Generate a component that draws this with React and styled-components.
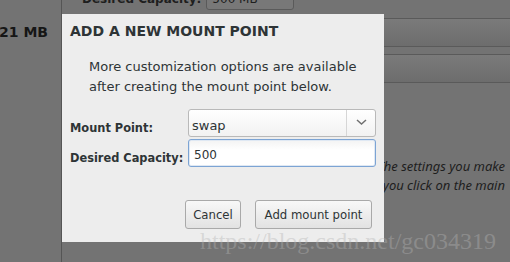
import React from "react";
import styled, { createGlobalStyle } from "styled-components";

const GlobalStyle = createGlobalStyle`
  html, body {
    margin: 0;
    padding: 0;
    background: #737373;
  }
  body {
    font-family: "DejaVu Sans", "Noto Sans", sans-serif;
    color: #2e3436;
  }
`;

const Screen = styled.div`
  position: relative;
  width: 510px;
  height: 262px;
  overflow: hidden;
  background: #737373;
  display: flex;
`;

const SideColumn = styled.div`
  width: 62px;
  flex: none;
  border-right: 1px solid #555;
  display: flex;
  flex-direction: column;
  align-items: flex-end;
  padding-top: 24px;
  box-sizing: border-box;
`;

const SizeLabel = styled.div`
  font-size: 14px;
  line-height: 16px;
  font-weight: 700;
  color: #161616;
  padding-right: 13px;
  white-space: nowrap;
`;

const Main = styled.div`
  flex: 1;
  display: flex;
  flex-direction: column;
`;

const TopRow = styled.div`
  display: flex;
  align-items: center;
  gap: 5px;
  height: 28px;
  margin-top: -18px;
  padding-left: 20px;
`;

const TopLabel = styled.span`
  font-size: 12px;
  font-weight: 700;
  color: #1e1e1e;
  padding-top: 6px;
  white-space: nowrap;
`;

const TopInput = styled.div`
  width: 88px;
  height: 28px;
  box-sizing: border-box;
  border: 1px solid #5a5a5a;
  border-radius: 3px;
  background: #787878;
  padding: 6px 0 0 5px;
  display: flex;
  align-items: center;
  font-size: 12px;
  color: #1e1e1e;
`;

const Band = styled.div`
  height: 29px;
  margin-top: ${(p) => p.$gap}px;
  border-top: 1px solid #5a5a5a;
  border-bottom: 1px solid #5a5a5a;
  background: linear-gradient(#7a7a7a, #6d6d6d);
  box-sizing: border-box;
`;

const Note = styled.div`
  margin-top: 74px;
  padding-right: 5px;
  font-family: "Noto Sans", sans-serif;
  font-style: italic;
  font-size: 13px;
  line-height: 19px;
  color: #1e1e1e;
  text-align: right;
  white-space: nowrap;
`;

const Dialog = styled.div`
  position: absolute;
  left: 62px;
  top: 14px;
  width: 322px;
  height: 228px;
  background: #ededed;
  box-sizing: border-box;
  padding: 8px 8px 0 8px;
  display: flex;
  flex-direction: column;
`;

const Title = styled.h1`
  margin: 0;
  font-size: 14px;
  font-weight: 700;
  color: #2e3436;
  line-height: 18px;
`;

const Intro = styled.p`
  margin: 17px 0 0 19px;
  font-size: 13px;
  line-height: 20px;
  color: #2e3436;
`;

const FormGrid = styled.div`
  margin-top: 12px;
  display: grid;
  grid-template-columns: 118px 188px;
  grid-auto-rows: 28px;
  row-gap: 2px;
  align-items: center;
`;

const FieldLabel = styled.label`
  font-size: 11.4px;
  font-weight: 700;
  color: #2e3436;
  padding-top: 9px;
  white-space: nowrap;
`;

const Select = styled.div`
  height: 28px;
  box-sizing: border-box;
  border: 1px solid #b9b9b9;
  border-radius: 3px;
  background: linear-gradient(#ffffff, #f2f2f2);
  display: flex;
  align-items: stretch;
  font-size: 13px;
`;

const SelectValue = styled.div`
  flex: 1;
  display: flex;
  align-items: center;
  padding: 5px 0 0 3px;
`;

const SelectArrow = styled.div`
  width: 28px;
  border-left: 1px solid #d6d6d6;
  display: flex;
  align-items: center;
  justify-content: center;
  padding-bottom: 3px;
`;

const TextInput = styled.div`
  height: 28px;
  box-sizing: border-box;
  border: 1px solid #7ca4d4;
  border-radius: 3px;
  background: linear-gradient(#f3f3f3, #ffffff 40%);
  box-shadow: inset 0 0 0 1px #dfe8f3;
  display: flex;
  align-items: center;
  padding: 3px 0 0 5px;
  font-size: 12px;
`;

const Actions = styled.div`
  margin-top: 33px;
  padding-right: 4px;
  display: flex;
  justify-content: flex-end;
  gap: 14px;
`;

const Button = styled.button`
  width: ${(p) => p.$width}px;
  height: 29px;
  padding: 1px 0 0;
  border: 1px solid #a9a9a9;
  border-radius: 3px;
  background: linear-gradient(#f8f8f8, #e2e2e2);
  font-family: inherit;
  font-size: 11.7px;
  color: #2e3436;
`;

const Watermark = styled.div`
  position: absolute;
  left: 200px;
  top: 229px;
  font-family: "Liberation Serif", serif;
  font-size: 24px;
  line-height: 24px;
  color: rgba(180, 180, 180, 0.4);
  white-space: nowrap;
  pointer-events: none;
`;

function Chevron() {
  return (
    <svg width="11" height="6" viewBox="0 0 11 6">
      <path d="M1 1 L5.5 5 L10 1" fill="none" stroke="#707070" strokeWidth="1.5" />
    </svg>
  );
}

export default function App() {
  return (
    <>
      <GlobalStyle />
      <Screen>
        <SideColumn>
          <SizeLabel>21 MB</SizeLabel>
        </SideColumn>
        <Main>
          <TopRow>
            <TopLabel>Desired Capacity:</TopLabel>
            <TopInput>500 MB</TopInput>
          </TopRow>
          <Band $gap={8} />
          <Band $gap={7} />
          <Note>
            Note: The settings you make
            <br />
            will not be applied until you click on the main
          </Note>
        </Main>

        <Dialog>
          <Title>ADD A NEW MOUNT POINT</Title>
          <Intro>
            More customization options are available
            <br />
            after creating the mount point below.
          </Intro>
          <FormGrid>
            <FieldLabel>Mount Point:</FieldLabel>
            <Select>
              <SelectValue>swap</SelectValue>
              <SelectArrow>
                <Chevron />
              </SelectArrow>
            </Select>
            <FieldLabel>Desired Capacity:</FieldLabel>
            <TextInput>500</TextInput>
          </FormGrid>
          <Actions>
            <Button $width={56}>Cancel</Button>
            <Button $width={117}>Add mount point</Button>
          </Actions>
        </Dialog>

        <Watermark>https://blog.csdn.net/gc034319</Watermark>
      </Screen>
    </>
  );
}
